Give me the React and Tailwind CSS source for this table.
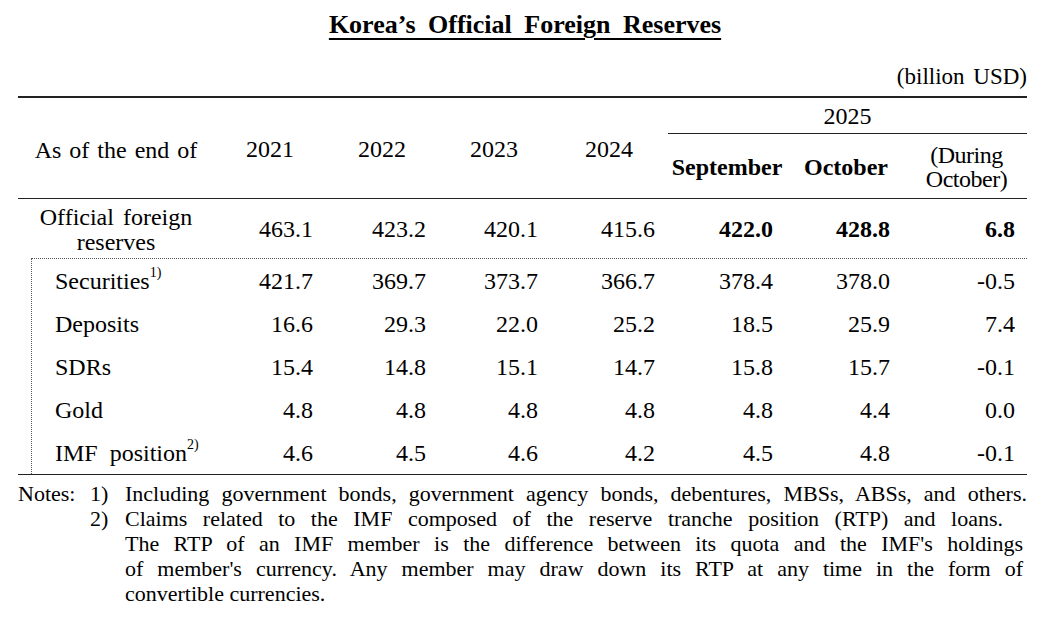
import React from 'react';

const years = ['2021', '2022', '2023', '2024'];

// right padding per data column, so numbers line up like the source table
const pads = ['pr-[13px]', 'pr-[12px]', 'pr-[12px]', 'pr-[13px]', 'pr-[13px]', 'pr-[16px]', 'pr-[12px]'];

const official = ['463.1', '423.2', '420.1', '415.6', '422.0', '428.8', '6.8'];

const rows = [
    { label: 'Securities', note: '1)', values: ['421.7', '369.7', '373.7', '366.7', '378.4', '378.0', '-0.5'] },
    { label: 'Deposits', values: ['16.6', '29.3', '22.0', '25.2', '18.5', '25.9', '7.4'] },
    { label: 'SDRs', values: ['15.4', '14.8', '15.1', '14.7', '15.8', '15.7', '-0.1'] },
    { label: 'Gold', values: ['4.8', '4.8', '4.8', '4.8', '4.8', '4.4', '0.0'] },
    { label: 'IMF  position', note: '2)', values: ['4.6', '4.5', '4.6', '4.2', '4.5', '4.8', '-0.1'] },
];

const App = () => {
    return (
        <div className="w-[1050px] h-[618px] bg-white text-black [font-family:'Liberation_Serif','Times_New_Roman',serif] overflow-hidden">
            {/* Title */}
            <div className="pt-[9px] h-[41px] flex justify-center">
                <h1 className="text-[26px] leading-[32px] font-bold underline decoration-2 underline-offset-[5px] [word-spacing:6px]">
                    Korea’s Official Foreign Reserves
                </h1>
            </div>

            <div className="mt-[22px] h-[28px] pr-[23px] text-right text-[23px] leading-[28px] [word-spacing:3px]">
                (billion USD)
            </div>

            <div className="ml-[18px] mt-[5px] w-[1009px] text-[24px]">
                {/* Header */}
                <div className="grid grid-cols-[196px_112px_112px_112px_118px_118px_120px_121px] grid-rows-[36px_64px] border-t-2 border-b border-[#222]">
                    <div className="row-span-2 flex items-center justify-center pt-[3px] [word-spacing:2px]">As of the end of</div>
                    {years.map((y) => (
                        <div key={y} className="row-span-2 flex items-center justify-center pt-[2px]">{y}</div>
                    ))}
                    <div className="col-span-3 flex items-center justify-center border-b border-[#222]">2025</div>
                    <div className="flex items-center justify-center font-bold pt-[2px]">September</div>
                    <div className="flex items-center justify-center font-bold pt-[2px]">October</div>
                    <div className="flex flex-col items-center justify-center leading-[24px] tracking-[-0.5px] pt-[2px]">
                        <span>(During</span>
                        <span>October)</span>
                    </div>
                </div>

                {/* Official foreign reserves */}
                <div className="grid grid-cols-[196px_112px_112px_112px_118px_118px_120px_121px] h-[59px]">
                    <div className="flex flex-col items-center justify-center leading-[25px] pt-[2px] [word-spacing:3px]">
                        <span>Official foreign</span>
                        <span>reserves</span>
                    </div>
                    {official.map((v, i) => (
                        <div key={i} className={`flex items-center justify-end ${pads[i]} ${i >= 4 ? 'font-bold' : ''}`}>
                            {v}
                        </div>
                    ))}
                </div>

                {/* Components */}
                <div className="border-b border-[#222]">
                    <div className="ml-[13px] border-l border-t border-dotted border-[#555]">
                        {rows.map((row) => (
                            <div key={row.label} className="grid grid-cols-[182px_112px_112px_112px_118px_118px_120px_121px] h-[43px]">
                                <div className="flex items-center pl-[23px] whitespace-pre">
                                    {row.label}
                                    {row.note && <sup className="text-[14px] -top-[8px]">{row.note}</sup>}
                                </div>
                                {row.values.map((v, i) => (
                                    <div key={i} className={`flex items-center justify-end ${pads[i]}`}>
                                        {v}
                                    </div>
                                ))}
                            </div>
                        ))}
                    </div>
                </div>

                {/* Notes */}
                <div className="mt-[6px] grid grid-cols-[72px_35px_902px] text-[22px] leading-[25px] whitespace-nowrap">
                    <div>Notes:</div>
                    <div>1)</div>
                    <div className="text-justify [text-align-last:justify]">
                        Including government bonds, government agency bonds, debentures, MBSs, ABSs, and others.
                    </div>
                    <div></div>
                    <div>2)</div>
                    <div className="pr-[4px]">
                        <div className="pr-[20px] text-justify [text-align-last:justify]">Claims related to the IMF composed of the reserve tranche position (RTP) and loans.</div>
                        <div className="text-justify [text-align-last:justify]">The RTP of an IMF member is the difference between its quota and the IMF's holdings</div>
                        <div className="text-justify [text-align-last:justify]">of member's currency. Any member may draw down its RTP at any time in the form of</div>
                        <div>convertible currencies.</div>
                    </div>
                </div>
            </div>
        </div>
    );
};

export default App;
